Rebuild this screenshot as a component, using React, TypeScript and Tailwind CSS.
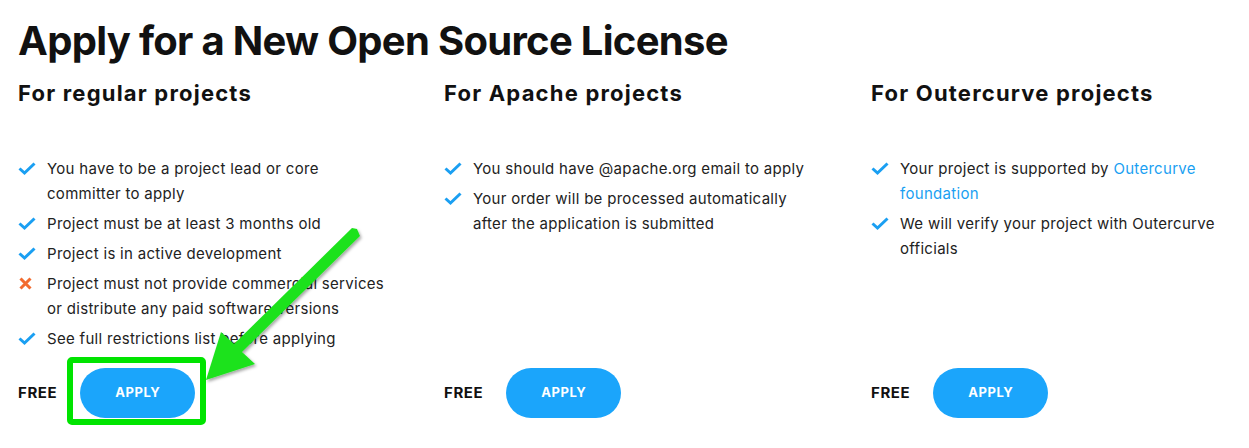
import type { ReactNode } from "react"

// ---------------------------------------------------------------------------
// License application options — three columns with requirements and CTA
// ---------------------------------------------------------------------------

type Item = { ok: boolean; text: ReactNode }

const columns: { title: string; items: Item[] }[] = [
  {
    title: "For regular projects",
    items: [
      { ok: true, text: "You have to be a project lead or core committer to apply" },
      { ok: true, text: "Project must be at least 3 months old" },
      { ok: true, text: "Project is in active development" },
      { ok: false, text: "Project must not provide commercial services or distribute any paid software versions" },
      { ok: true, text: "See full restrictions list before applying" },
    ],
  },
  {
    title: "For Apache projects",
    items: [
      { ok: true, text: "You should have @apache.org email to apply" },
      { ok: true, text: "Your order will be processed automatically after the application is submitted" },
    ],
  },
  {
    title: "For Outercurve projects",
    items: [
      {
        ok: true,
        text: (
          <>
            Your project is supported by <a className="text-[#1a9ff2]">Outercurve foundation</a>
          </>
        ),
      },
      { ok: true, text: "We will verify your project with Outercurve officials" },
    ],
  },
]

function Check() {
  return (
    <svg width="18" height="14" viewBox="0 0 18 14" className="shrink-0">
      <polyline points="1.5,6.5 6.5,11 16.5,1.5" fill="none" stroke="#1a9ff2" strokeWidth="3" strokeLinejoin="miter" />
    </svg>
  )
}

function Cross() {
  return (
    <svg width="18" height="14" viewBox="0 0 18 14" className="shrink-0">
      <path d="M2.5 1.5 L12.5 11.5 M12.5 1.5 L2.5 11.5" stroke="#f26b2f" strokeWidth="3" />
    </svg>
  )
}

export default function App() {
  return (
    <div
      className="relative h-[448px] w-[1249px] overflow-hidden bg-white pl-[18px] text-[#222]"
      style={{ fontFamily: "Inter, 'Liberation Sans', sans-serif" }}
    >
      <h1 className="pt-[17px] text-[40px] font-bold leading-[48px] tracking-[-0.7px] text-[#111]">
        Apply for a New Open Source License
      </h1>

      <div className="grid grid-cols-[426px_427px_1fr]">
        {columns.map((col) => (
          <div key={col.title} className="flex flex-col">
            <h2 className="mt-[14px] text-[22px] font-bold leading-[28px] tracking-[1.2px] text-[#111]">
              {col.title}
            </h2>
            <ul className="mt-[49px] flex flex-1 flex-col gap-[5px]">
              {col.items.map((item, i) => (
                <li key={i} className="flex w-[374px] gap-[11px] text-[15px] leading-[25px] tracking-[0.3px]">
                  <span className="flex h-[25px] items-center">{item.ok ? <Check /> : <Cross />}</span>
                  <span>{item.text}</span>
                </li>
              ))}
            </ul>
            <div className="mt-[17px] flex items-center gap-[23px]">
              <span className="text-[15px] font-bold tracking-[0.6px] text-[#111]">FREE</span>
              <button className="h-[50px] w-[115px] rounded-full bg-[#1ba5fb] text-[13px] font-bold tracking-[0.6px] text-white">
                APPLY
              </button>
            </div>
          </div>
        ))}
      </div>

      {/* screenshot annotation: green box + arrow */}
      <svg className="pointer-events-none absolute left-0 top-0" width="1249" height="448">
        <defs>
          <filter id="sh" x="-20%" y="-20%" width="140%" height="140%">
            <feDropShadow dx="1.5" dy="2" stdDeviation="1.5" floodColor="#000" floodOpacity="0.35" />
          </filter>
        </defs>
        <rect x="70" y="360" width="133" height="62" rx="2" fill="none" stroke="#00e400" strokeWidth="6" />
        <polygon
          filter="url(#sh)"
          fill="#1de21d"
          points="206,380 221,332 234,344 352,228 357,229 360,236 242,352 255,364"
        />
      </svg>
    </div>
  )
}
